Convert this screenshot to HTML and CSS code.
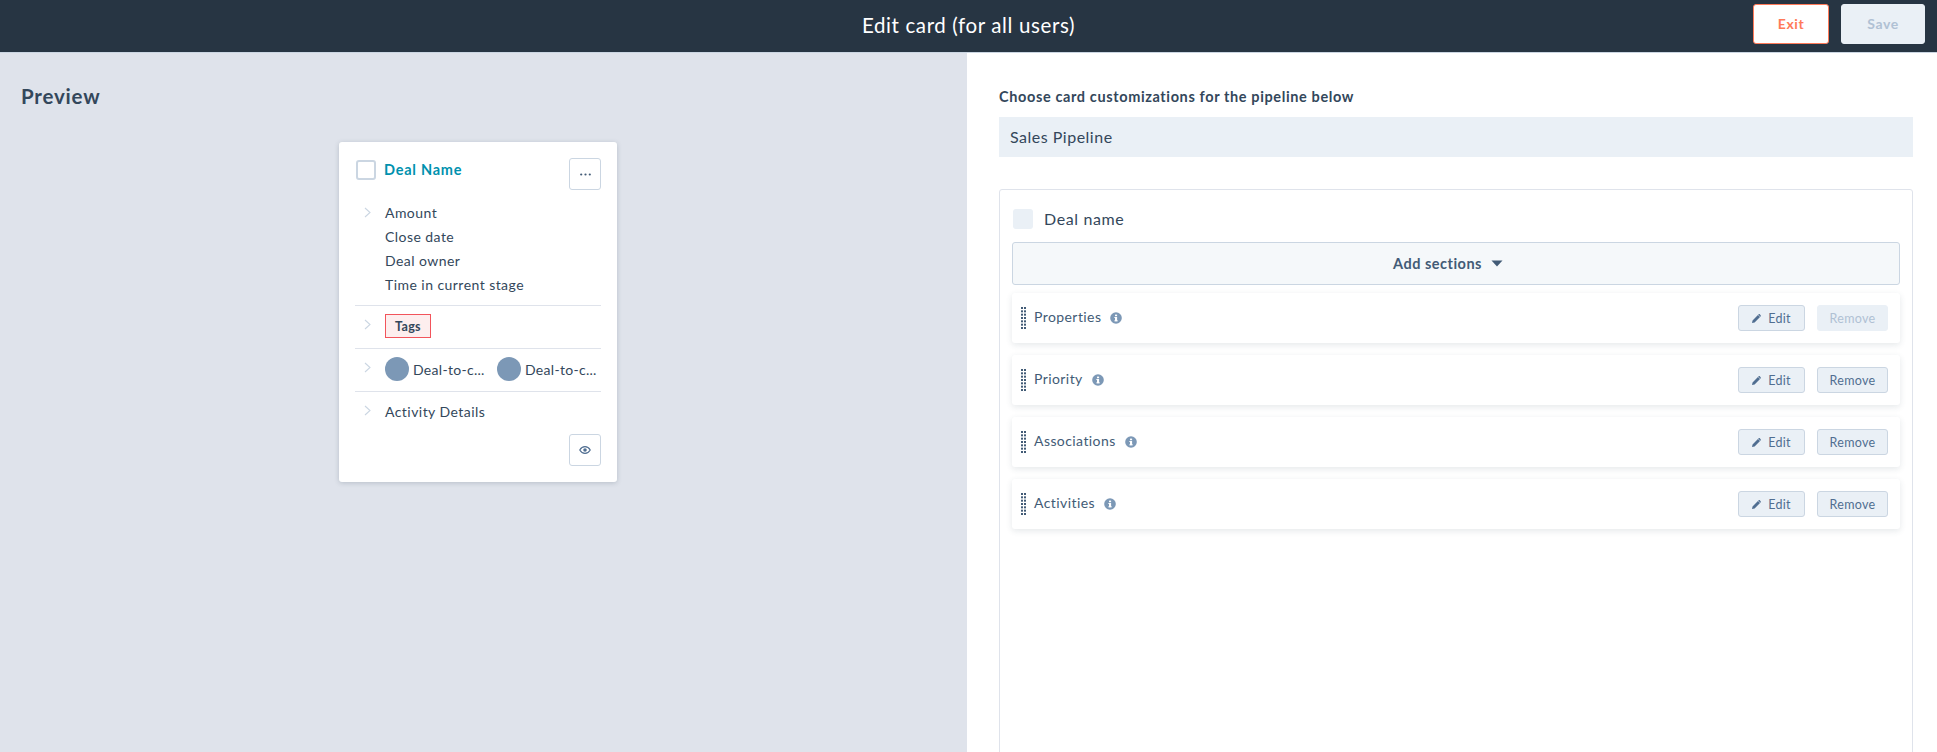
FILE: index.html
```html
<!DOCTYPE html>
<html lang="en">
<head>
<meta charset="utf-8">
<title>Edit card</title>
<link rel="stylesheet" href="styles.css">
</head>
<body>
<svg class="defs" width="0" height="0" aria-hidden="true">
  <symbol id="chev" viewBox="0 0 7 11"><path d="M1 1l5 4.5L1 10" fill="none" stroke="#cbd6e2" stroke-width="1.1"/></symbol>
  <symbol id="info" viewBox="0 0 12 12"><circle cx="6" cy="6" r="5.8" fill="#7c98b6"/><rect x="5" y="5" width="2.1" height="4.2" fill="#fff"/><rect x="5" y="2.6" width="2.1" height="1.6" fill="#fff"/><rect x="4.3" y="5" width="1" height=".9" fill="#fff"/><rect x="4.3" y="8.4" width="3.5" height=".9" fill="#fff"/></symbol>
  <symbol id="pencil" viewBox="0 0 10 10"><path d="M0 10l.6-2.9L6.600 1.100 8.900 3.400 2.900 9.400zM7.300.4c.4-.4 1-.4 1.400 0l.9.9c.4.4.4 1 0 1.400l-.3.3-2.300-2.300z" fill="#506e91"/></symbol>
  <symbol id="grip" viewBox="0 0 5 22"><g fill="#425b76"><rect x="0" y="0" width="2" height="2"/><rect x="3" y="0" width="2" height="2"/><rect x="0" y="3.330" width="2" height="2"/><rect x="3" y="3.330" width="2" height="2"/><rect x="0" y="6.670" width="2" height="2"/><rect x="3" y="6.670" width="2" height="2"/><rect x="0" y="10" width="2" height="2"/><rect x="3" y="10" width="2" height="2"/><rect x="0" y="13.330" width="2" height="2"/><rect x="3" y="13.330" width="2" height="2"/><rect x="0" y="16.670" width="2" height="2"/><rect x="3" y="16.670" width="2" height="2"/><rect x="0" y="20" width="2" height="2"/><rect x="3" y="20" width="2" height="2"/></g></symbol>
</svg>
<header class="topbar">
  <h1 class="topbar-title">Edit card (for all users)</h1>
  <div class="topbar-actions">
    <button class="btn-exit">Exit</button>
    <button class="btn-save">Save</button>
  </div>
</header>
<main class="main">
  <section class="preview">
    <h2 class="preview-title">Preview</h2>
    <div class="preview-stage">
      <article class="card">
        <div class="card-head">
          <span class="card-check"></span>
          <span class="card-name">Deal Name</span>
          <span class="icon-btn"><svg width="11" height="3" viewBox="0 0 11 3"><g fill="#425b76"><circle cx="1.2" cy="1.5" r="1.100"/><circle cx="5.500" cy="1.5" r="1.100"/><circle cx="9.800" cy="1.5" r="1.100"/></g></svg></span>
        </div>
        <div class="card-section first">
          <svg class="chev"><use href="#chev"/></svg>
          <div class="stack">
            <div class="line">Amount</div>
            <div class="line">Close date</div>
            <div class="line">Deal owner</div>
            <div class="line">Time in current stage</div>
          </div>
        </div>
        <div class="card-section tags-row">
          <svg class="chev"><use href="#chev"/></svg>
          <span class="tag">Tags</span>
        </div>
        <div class="card-section assoc-row">
          <svg class="chev"><use href="#chev"/></svg>
          <span class="assoc"><span class="avatar"></span><span class="assoc-name">Deal-to-c...</span></span>
          <span class="assoc"><span class="avatar"></span><span class="assoc-name">Deal-to-c...</span></span>
        </div>
        <div class="card-section activity-row">
          <svg class="chev"><use href="#chev"/></svg>
          <div class="line">Activity Details</div>
        </div>
        <div class="card-foot">
          <span class="icon-btn"><svg width="12" height="8" viewBox="0 0 13 9"><path d="M.6 4.500C2 2 4 .7 6.500.7s4.500 1.300 5.900 3.800C11 7 9 8.300 6.500 8.300S2 7 .6 4.500z" fill="none" stroke="#506e91" stroke-width="1.300"/><circle cx="6.500" cy="4.500" r="2" fill="#506e91"/></svg></span>
        </div>
      </article>
    </div>
  </section>
  <section class="editor">
    <label class="pipeline-label">Choose card customizations for the pipeline below</label>
    <div class="pipeline-select">Sales Pipeline</div>
    <div class="config">
      <div class="config-head">
        <span class="config-check"></span>
        <span class="config-name">Deal name</span>
      </div>
      <button class="add-sections">Add sections <svg class="caret" width="12" height="7" viewBox="0 0 12 7"><path d="M.5.5h11L6 6.500z" fill="#425b76"/></svg></button>
      <div class="row">
        <svg class="grip"><use href="#grip"/></svg>
        <span class="row-name">Properties</span>
        <svg class="info"><use href="#info"/></svg>
        <span class="row-actions">
          <button class="mini"><svg class="pencil"><use href="#pencil"/></svg>Edit</button>
          <button class="mini disabled">Remove</button>
        </span>
      </div>
      <div class="row">
        <svg class="grip"><use href="#grip"/></svg>
        <span class="row-name">Priority</span>
        <svg class="info"><use href="#info"/></svg>
        <span class="row-actions">
          <button class="mini"><svg class="pencil"><use href="#pencil"/></svg>Edit</button>
          <button class="mini">Remove</button>
        </span>
      </div>
      <div class="row">
        <svg class="grip"><use href="#grip"/></svg>
        <span class="row-name">Associations</span>
        <svg class="info"><use href="#info"/></svg>
        <span class="row-actions">
          <button class="mini"><svg class="pencil"><use href="#pencil"/></svg>Edit</button>
          <button class="mini">Remove</button>
        </span>
      </div>
      <div class="row">
        <svg class="grip"><use href="#grip"/></svg>
        <span class="row-name">Activities</span>
        <svg class="info"><use href="#info"/></svg>
        <span class="row-actions">
          <button class="mini"><svg class="pencil"><use href="#pencil"/></svg>Edit</button>
          <button class="mini">Remove</button>
        </span>
      </div>
    </div>
  </section>
</main>
</body>
</html>
```

FILE: styles.css
```css
* { box-sizing: border-box; }
html, body { margin: 0; height: 100%; }
body {
  height: 752px;
  overflow: hidden;
  display: flex;
  flex-direction: column;
  font-family: "Lato", "Liberation Sans", sans-serif;
  color: #33475b;
  background: #fff;
}
button { font-family: inherit; cursor: pointer; }
.defs { position: absolute; }

.topbar {
  height: 53px;
  flex: none;
  background: #273543;
  border-bottom: 1px solid #cbd6e2;
  display: flex;
  align-items: center;
  justify-content: center;
  position: relative;
}
.topbar-title { margin: 0 0 2px; font-size: 20.500px; font-weight: 400; color: #fff; letter-spacing: .62px; }
.topbar-actions { position: absolute; right: 12px; top: 4px; display: flex; gap: 12px; }
.btn-exit, .btn-save {
  height: 40px;
  border-radius: 3px;
  font-size: 14px;
  font-weight: 700;
  letter-spacing: .6px;
  padding: 0 0 2px;
}
.btn-exit { width: 76px; background: #fff; border: 1px solid #ff7a59; color: #ff7a59; }
.btn-save { width: 84px; background: #eaf0f6; border: 1px solid #eaf0f6; color: #b0c1d4; }

.main { flex: 1; display: flex; min-height: 0; }
.preview { width: 967px; flex: none; background: #dfe3eb; padding: 28px 21px 0; }
.preview-title { margin: 0; font-size: 20.500px; line-height: 30px; font-weight: 700; color: #33475b; letter-spacing: .8px; }
.preview-stage { padding: 31px 0 0 318px; }

.card {
  width: 278px;
  height: 340px;
  background: #fff;
  border-radius: 3px;
  box-shadow: 0 1px 5px rgba(45, 62, 80, .22);
  padding: 16px;
}
.card-head { display: flex; align-items: flex-start; height: 32px; margin-bottom: 11px; }
.card-check { width: 20px; height: 20px; margin: 2px 8px 0 1px; border: 2px solid #cbd6e2; border-radius: 3px; background: #fff; }
.card-name { font-size: 14.500px; line-height: 24px; font-weight: 700; color: #0091ae; letter-spacing: .75px; flex: 1; }
.icon-btn {
  width: 32px; height: 32px;
  display: flex; align-items: center; justify-content: center;
  border: 1px solid #cbd6e2; border-radius: 3px; background: #fff;
}
.card-section { display: flex; align-items: flex-start; border-bottom: 1px solid #dfe3eb; }
.card-section .chev { width: 7px; height: 11px; margin: 6px 14px 0 9px; flex: none; }
.first { height: 105px; }
.line { font-size: 14px; line-height: 24px; letter-spacing: .45px; color: #33475b; }
.tags-row { height: 43px; padding-top: 8px; }
.tags-row .chev { margin-top: 5px; }
.tag { width: 46px; height: 24px; display: flex; align-items: center; justify-content: center; background: #fdeeee; border: 1px solid #f2545b; font-size: 12.500px; font-weight: 700; letter-spacing: .3px; }
.assoc-row { height: 43px; padding-top: 8px; }
.assoc-row .chev { margin-top: 5px; }
.assoc { display: flex; align-items: center; width: 112px; flex: none; }
.avatar { width: 24px; height: 24px; border-radius: 50%; background: #7c98b6; margin-right: 4px; flex: none; }
.assoc-name { font-size: 14px; letter-spacing: .3px; white-space: nowrap; }
.activity-row { border-bottom: 0; height: 42px; padding-top: 8px; }
.activity-row .chev { margin-top: 5px; }
.card-foot { display: flex; justify-content: flex-end; }

.editor { flex: 1; padding: 32px 24px 0 32px; min-width: 0; }
.pipeline-label { display: block; font-size: 14.500px; line-height: 24px; font-weight: 700; letter-spacing: .62px; color: #33475b; }
.pipeline-select { margin-top: 8px; height: 40px; background: #eaf0f6; padding: 0 11px; font-size: 16px; line-height: 40px; letter-spacing: .5px; color: #33475b; }
.config { margin-top: 32px; height: 600px; border: 1px solid #dfe3eb; border-radius: 3px; padding: 18px 12px 0; }
.config-head { display: flex; align-items: center; height: 22px; margin: 0 0 12px 1px; }
.config-check { width: 20px; height: 20px; border-radius: 3px; background: #eaf0f6; margin-right: 11px; }
.config-name { font-size: 16px; line-height: 20px; letter-spacing: .62px; }
.add-sections {
  width: 100%; height: 43px;
  display: flex; align-items: center; justify-content: center; gap: 9px;
  background: #f5f8fa; border: 1px solid #cbd6e2; border-radius: 3px;
  font-size: 14.500px; font-weight: 700; letter-spacing: .5px; color: #425b76;
  padding: 0 16px 0 0;
  margin-bottom: 8px;
}
.row {
  height: 50px; margin-bottom: 12px;
  display: flex; align-items: center;
  background: #fff; border-radius: 3px;
  box-shadow: 0 2px 6px rgba(45, 62, 80, .12);
  padding: 0 12px 0 9px;
}
.grip { width: 5px; height: 22px; margin-right: 8px; flex: none; }
.row-name { font-size: 14px; line-height: 20px; margin-bottom: 2px; letter-spacing: .42px; color: #425b76; }
.info { width: 12px; height: 12px; margin-left: 9px; flex: none; }
.row-actions { margin-left: auto; display: flex; gap: 12px; }
.mini {
  height: 26px; width: 71px;
  display: flex; align-items: center; justify-content: center; gap: 7px;
  background: #eaf0f6; border: 1px solid #cbd6e2; border-radius: 3px;
  font-size: 12.500px; letter-spacing: .3px; color: #506e91; padding: 0;
}
.row-actions .mini:first-child { width: 67px; }
.mini.disabled { background: #eaf0f6; border-color: #eaf0f6; color: #b0c1d4; }
.pencil { width: 9px; height: 9px; flex: none; }
```
